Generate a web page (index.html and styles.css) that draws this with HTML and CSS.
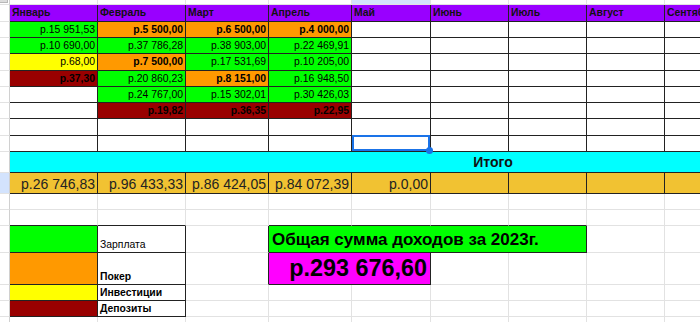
FILE: index.html
```html
<!DOCTYPE html>
<html lang="ru">
<head>
<meta charset="utf-8">
<title>Доходы 2023</title>
<link rel="stylesheet" href="styles.css">
</head>
<body>
<div class="sheet">
  <!-- row 1: column header strip -->
  <div class="c g corner"><span class="corner-box"></span></div>
  <div class="c s"></div><div class="c s"></div><div class="c s"></div><div class="c s"></div>
  <div class="c s hl"></div><div class="c s"></div><div class="c s"></div><div class="c s"></div><div class="c s"></div>

  <!-- row 2: months -->
  <div class="c g"></div>
  <div class="c d hd">Январь</div><div class="c d hd">Февраль</div><div class="c d hd">Март</div><div class="c d hd">Апрель</div>
  <div class="c d hd">Май</div><div class="c d hd">Июнь</div><div class="c d hd">Июль</div><div class="c d hd">Август</div><div class="c d hd">Сентябрь</div>

  <!-- data row 1 -->
  <div class="c g"></div>
  <div class="c d v gr">р.15 951,53</div><div class="c d v or">р.5 500,00</div><div class="c d v or">р.6 500,00</div><div class="c d v or">р.4 000,00</div>
  <div class="c d"></div><div class="c d"></div><div class="c d"></div><div class="c d"></div><div class="c d"></div>

  <!-- data row 2 -->
  <div class="c g"></div>
  <div class="c d v gr">р.10 690,00</div><div class="c d v gr">р.37 786,28</div><div class="c d v gr">р.38 903,00</div><div class="c d v gr">р.22 469,91</div>
  <div class="c d"></div><div class="c d"></div><div class="c d"></div><div class="c d"></div><div class="c d"></div>

  <!-- data row 3 -->
  <div class="c g"></div>
  <div class="c d v ye">р.68,00</div><div class="c d v or">р.7 500,00</div><div class="c d v gr">р.17 531,69</div><div class="c d v gr">р.10 205,00</div>
  <div class="c d"></div><div class="c d"></div><div class="c d"></div><div class="c d"></div><div class="c d"></div>

  <!-- data row 4 -->
  <div class="c g"></div>
  <div class="c d v rd">р.37,30</div><div class="c d v gr">р.20 860,23</div><div class="c d v or">р.8 151,00</div><div class="c d v gr">р.16 948,50</div>
  <div class="c d"></div><div class="c d"></div><div class="c d"></div><div class="c d"></div><div class="c d"></div>

  <!-- data row 5 -->
  <div class="c g"></div>
  <div class="c d"></div><div class="c d v gr">р.24 767,00</div><div class="c d v gr">р.15 302,01</div><div class="c d v gr">р.30 426,03</div>
  <div class="c d"></div><div class="c d"></div><div class="c d"></div><div class="c d"></div><div class="c d"></div>

  <!-- data row 6 -->
  <div class="c g"></div>
  <div class="c d"></div><div class="c d v rd">р.19,82</div><div class="c d v rd">р.36,35</div><div class="c d v rd">р.22,95</div>
  <div class="c d"></div><div class="c d"></div><div class="c d"></div><div class="c d"></div><div class="c d"></div>

  <!-- data row 7 -->
  <div class="c g"></div>
  <div class="c d"></div><div class="c d"></div><div class="c d"></div><div class="c d"></div>
  <div class="c d"></div><div class="c d"></div><div class="c d"></div><div class="c d"></div><div class="c d"></div>

  <!-- data row 8 -->
  <div class="c g"></div>
  <div class="c d"></div><div class="c d"></div><div class="c d"></div><div class="c d"></div>
  <div class="c d sel-cell"><span class="sel"></span><span class="sel-dot"></span></div><div class="c d"></div><div class="c d"></div><div class="c d"></div><div class="c d"></div>

  <!-- total label -->
  <div class="c g"></div>
  <div class="c d total-label">Итого</div>

  <!-- totals -->
  <div class="c g hlg"></div>
  <div class="c d tot">р.26 746,83</div><div class="c d tot">р.96 433,33</div><div class="c d tot">р.86 424,05</div><div class="c d tot">р.84 072,39</div>
  <div class="c d tot">р.0,00</div><div class="c d tot"></div><div class="c d tot"></div><div class="c d tot"></div><div class="c d tot"></div>

  <!-- empty row -->
  <div class="c g"></div>
  <div class="c"></div><div class="c"></div><div class="c"></div><div class="c"></div>
  <div class="c"></div><div class="c"></div><div class="c"></div><div class="c"></div><div class="c"></div>

  <!-- empty row above legend -->
  <div class="c g"></div>
  <div class="c bb"></div><div class="c bb"></div><div class="c"></div><div class="c bb"></div>
  <div class="c bb"></div><div class="c bb"></div><div class="c bb"></div><div class="c"></div><div class="c"></div>

  <!-- legend 1 + title -->
  <div class="c g"></div>
  <div class="c d gr"></div><div class="c d lab">Зарплата</div><div class="c br"></div>
  <div class="c d title">Общая сумма доходов за 2023г.</div>
  <div class="c"></div><div class="c"></div>

  <!-- legend 2 + sum -->
  <div class="c g"></div>
  <div class="c d or"></div><div class="c d lab b">Покер</div><div class="c br"></div>
  <div class="c d sum">р.293 676,60</div>
  <div class="c"></div><div class="c"></div><div class="c"></div><div class="c"></div>

  <!-- legend 3 -->
  <div class="c g"></div>
  <div class="c d ye"></div><div class="c d lab b">Инвестиции</div><div class="c"></div>
  <div class="c"></div><div class="c"></div><div class="c"></div><div class="c"></div><div class="c"></div><div class="c"></div>

  <!-- legend 4 -->
  <div class="c g"></div>
  <div class="c d rd"></div><div class="c d lab b">Депозиты</div><div class="c"></div>
  <div class="c"></div><div class="c"></div><div class="c"></div><div class="c"></div><div class="c"></div><div class="c"></div>

  <!-- last row -->
  <div class="c g"></div>
  <div class="c"></div><div class="c"></div><div class="c"></div><div class="c"></div>
  <div class="c"></div><div class="c"></div><div class="c"></div><div class="c"></div><div class="c"></div>
</div>
</body>
</html>
```

FILE: styles.css
```css
html, body {
  margin: 0;
  padding: 0;
  background: #ffffff;
  overflow: hidden;
}

body {
  width: 700px;
  height: 322px;
  font-family: "Liberation Sans", Arial, sans-serif;
  color: #000;
}

.sheet {
  display: grid;
  grid-template-columns: 10px 88px 88px 83px 83px 79px 78px 78px 78px 312px;
  grid-template-rows: 5px 17px 16px 16px 17px 16px 16px 16px 17px 16px 21px 21px 16px 16px 27px 32px 16px 16px 16px;
  width: 977px;
}

.c {
  box-sizing: border-box;
  border-right: 1px solid #e2e2e2;
  border-bottom: 1px solid #e2e2e2;
  min-width: 0;
  overflow: visible;
  white-space: nowrap;
}

.g {
  border-right-color: #d0d0d0;
}

.corner {
  position: relative;
}

.corner-box {
  display: block;
  width: 8px;
  height: 3px;
  background: #dcdcdc;
  border-bottom: 1px solid #b8b8b8;
  border-right: 1px solid #b8b8b8;
  box-sizing: border-box;
}

.hl {
  background: #d3e3fd;
}

.hlg {
  background: #d3e3fd;
}

.d {
  border-color: #222;
}

.bb {
  border-bottom-color: #222;
}

.br {
  border-right-color: #222;
}

.hd {
  background: #9900ff;
  font-weight: bold;
  font-size: 10.4px;
  line-height: 16px;
  padding-left: 2px;
  color: #111;
  overflow: hidden;
}

.v {
  font-size: 10.4px;
  line-height: 15px;
  text-align: right;
  padding-right: 2px;
}

.gr { background: #00ff00; }
.or { background: #ff9900; font-weight: bold; }
.ye { background: #ffff00; }
.rd { background: #990000; font-weight: bold; }

.sel-cell {
  position: relative;
}

.sel {
  position: absolute;
  left: 0;
  right: 0;
  top: -1px;
  bottom: 0;
  border: 2px solid #1a73e8;
  box-sizing: border-box;
}

.sel-dot {
  position: absolute;
  right: -3px;
  bottom: -3px;
  width: 7px;
  height: 7px;
  border-radius: 50%;
  background: #1a73e8;
  z-index: 2;
}

.total-label {
  grid-column: 2 / 11;
  background: #00ffff;
  font-weight: bold;
  font-size: 14px;
  line-height: 20px;
  text-align: center;
  color: #111;
}

.tot {
  background: #f1c232;
  font-size: 14px;
  line-height: 16px;
  padding-top: 3px;
  text-align: right;
  padding-right: 2px;
  color: #222;
}

.lab {
  font-size: 10.4px;
  display: flex;
  align-items: flex-end;
  padding-left: 2px;
  padding-bottom: 1px;
  line-height: 12px;
}

.b {
  font-weight: bold;
}

.title {
  grid-column: 5 / 9;
  background: #00ff00;
  font-weight: bold;
  font-size: 17px;
  display: flex;
  align-items: center;
  padding-left: 3px;
  padding-top: 1px;
}

.sum {
  grid-column: 5 / 7;
  background: #ff00ff;
  font-weight: bold;
  font-size: 23.4px;
  display: flex;
  align-items: center;
  justify-content: flex-end;
  padding-right: 3px;
}
```
